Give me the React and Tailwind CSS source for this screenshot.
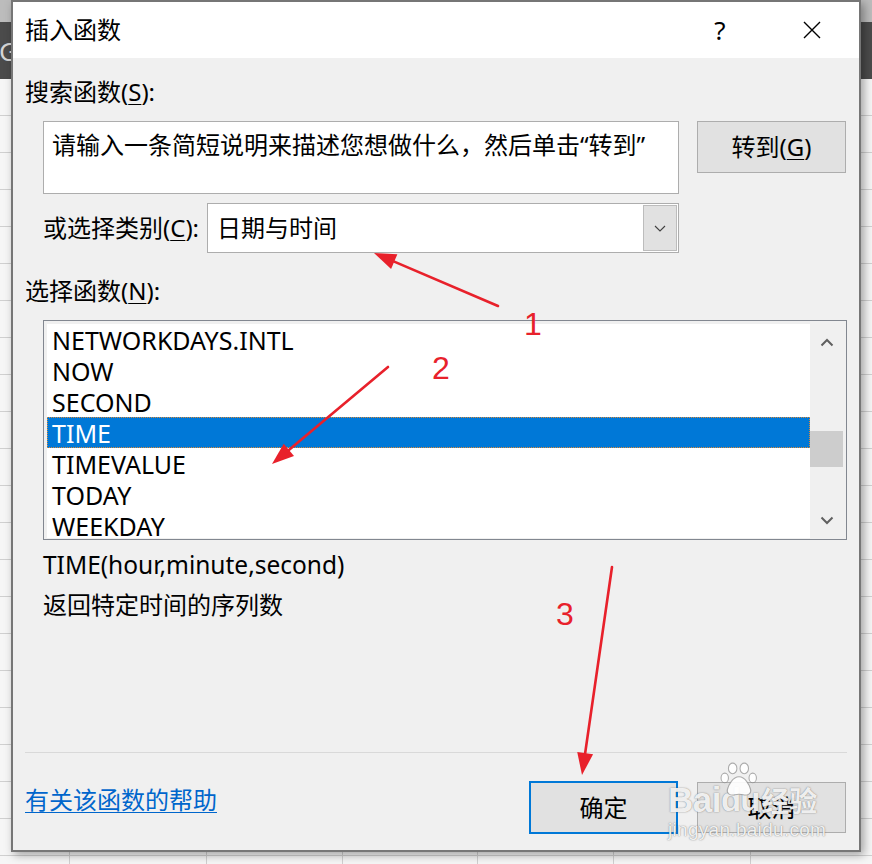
import React from "react";

const ROWS = Array.from({ length: 22 }, (_, i) => i);
const COLS = [0, 1, 2, 3, 4, 5, 6];
const ITEMS = ["NETWORKDAYS.INTL", "NOW", "SECOND", "TIME", "TIMEVALUE", "TODAY", "WEEKDAY"];

function arrowHead(x1, y1, x2, y2, len = 22, half = 8) {
  const dx = x2 - x1;
  const dy = y2 - y1;
  const d = Math.hypot(dx, dy);
  const ux = dx / d;
  const uy = dy / d;
  const bx = x2 - ux * len;
  const by = y2 - uy * len;
  const px = -uy * half;
  const py = ux * half;
  return {
    pts: `${x2},${y2} ${bx + px},${by + py} ${bx - px},${by - py}`,
    bx,
    by,
  };
}

function Arrow({ x1, y1, x2, y2 }) {
  const h = arrowHead(x1, y1, x2, y2);
  return (
    <g>
      <line x1={x1} y1={y1} x2={h.bx} y2={h.by} stroke="#e8212b" strokeWidth="2.6" strokeLinecap="round" />
      <polygon points={h.pts} fill="#e8212b" />
    </g>
  );
}

function U({ children }) {
  return <span className="underline underline-offset-[3px] decoration-1">{children}</span>;
}

export default function App() {
  return (
    <div className="relative w-[872px] h-[864px] overflow-hidden bg-[#f6f6f6] font-['Noto_Sans','Noto_Sans_CJK_SC',sans-serif] text-black">
      {/* spreadsheet backdrop */}
      <div className="absolute inset-0 flex flex-col">
        <div className="h-[22px] shrink-0 bg-[#bcbcbc]" />
        <div className="h-[57px] shrink-0 bg-[#4b4b4b] flex items-center">
          <span className="text-[26px] leading-none text-[#d4d4d4] ml-[-1px]">G</span>
        </div>
        {ROWS.map((r) => (
          <div
            key={r}
            className="h-[37px] shrink-0 grid grid-cols-[70px_137px_136px_135px_136px_137px_1fr] border-b border-[#d0d0d0]"
          >
            {COLS.map((c) => (
              <div key={c} className={c < 6 ? "border-r border-[#d0d0d0]" : ""} />
            ))}
          </div>
        ))}
      </div>

      {/* dialog window */}
      <div className="absolute left-[11px] top-0 w-[850px] h-[852px] border-2 border-[#767676] bg-[#f0f0f0] shadow-[3px_3px_9px_rgba(0,0,0,0.35)] flex flex-col">
        {/* title bar */}
        <div className="h-[56px] shrink-0 bg-white flex items-center pl-[12px] pr-[27px]">
          <span className="text-[24px] leading-[34px]">插入函数</span>
          <span className="ml-auto w-[40px] text-center text-[26px] leading-[34px]">?</span>
          <span className="ml-[52px] w-[40px] h-[34px] flex items-center justify-center">
            <svg width="18" height="18" viewBox="0 0 18 18">
              <path d="M1 1 L17 17 M17 1 L1 17" stroke="#000" strokeWidth="1.4" fill="none" />
            </svg>
          </span>
        </div>

        {/* body */}
        <div className="flex-1 flex flex-col px-[12px] pt-[17px] pb-[16px] text-[24px]">
          <div className="leading-[34px]">
            搜索函数(<U>S</U>):
          </div>

          <div className="mt-[12px] ml-[18px] flex gap-[18px]">
            <div className="w-[636px] h-[73px] border border-[#adadad] bg-white pl-[8px] pt-[6px] leading-[34px]">
              请输入一条简短说明来描述您想做什么，然后单击“转到”
            </div>
            <div className="w-[149px] h-[52px] border border-[#adadad] bg-[#e1e1e1] flex items-center justify-center leading-[34px]">
              转到(<U>G</U>)
            </div>
          </div>

          <div className="mt-[9px] ml-[18px] flex items-center h-[50px]">
            <div className="w-[164px] leading-[34px]">
              或选择类别(<U>C</U>):
            </div>
            <div className="w-[472px] h-[50px] border border-[#adadad] bg-white flex">
              <div className="flex-1 pl-[9px] flex items-center leading-[34px]">日期与时间</div>
              <div className="m-[1px] w-[34px] bg-[#e1e1e1] border border-[#bcbcbc] flex items-center justify-center">
                <svg width="12" height="7" viewBox="0 0 12 7">
                  <path d="M1 1 L6 6 L11 1" stroke="#404040" strokeWidth="1.1" fill="none" />
                </svg>
              </div>
            </div>
          </div>

          <div className="mt-[21px] leading-[34px]">
            选择函数(<U>N</U>):
          </div>

          <div className="mt-[12px] ml-[18px] w-[804px] h-[220px] border border-[#828790] bg-[#f0f0f0] pt-[3px] pl-[3px] pr-[3px] pb-[1px] flex">
            <div className="flex-1 bg-white overflow-hidden">
              {ITEMS.map((it, i) => (
                <div
                  key={it}
                  className={
                    "h-[31px] pl-[5px] pt-px text-[25px] leading-[31px] whitespace-nowrap " +
                    (i === 3
                      ? "bg-[#0078d7] text-white outline-1 outline-dotted outline-[#d98a3a] -outline-offset-1"
                      : "")
                  }
                >
                  {it}
                </div>
              ))}
            </div>
            <div className="w-[33px] bg-[#f0f0f0] flex flex-col">
              <div className="h-[36px] flex items-center justify-center">
                <svg width="14" height="9" viewBox="0 0 14 9">
                  <path d="M1.5 7.5 L7 2 L12.5 7.5" stroke="#606060" strokeWidth="2" fill="none" />
                </svg>
              </div>
              <div className="flex-1">
                <div className="mt-[71px] h-[36px] bg-[#cdcdcd]" />
              </div>
              <div className="h-[36px] flex items-center justify-center">
                <svg width="14" height="9" viewBox="0 0 14 9">
                  <path d="M1.5 1.5 L7 7 L12.5 1.5" stroke="#606060" strokeWidth="2" fill="none" />
                </svg>
              </div>
            </div>
          </div>

          <div className="mt-[5px] ml-[18px] text-[24.5px] leading-[40px]">TIME(hour,minute,second)</div>
          <div className="ml-[18px] leading-[40px]">返回特定时间的序列数</div>

          <div className="mt-auto h-px bg-[#d9d9d9]" />
          <div className="mt-[28px] flex items-start">
            <a className="mt-[2px] leading-[34px] text-[#0066cc] underline underline-offset-[3px] decoration-1">
              有关该函数的帮助
            </a>
            <div className="ml-auto w-[149px] h-[53px] border-2 border-[#0078d7] bg-[#e1e1e1] flex items-center justify-center leading-[34px]">
              确定
            </div>
            <div className="ml-[19px] mt-[1px] mr-[1px] w-[149px] h-[51px] border border-[#adadad] bg-[#e1e1e1] flex items-center justify-center leading-[34px]">
              取消
            </div>
          </div>
        </div>
      </div>

      {/* Baidu watermark */}
      <div className="absolute left-[668px] top-[764px] flex flex-col pointer-events-none text-[rgba(255,255,255,0.9)] [text-shadow:0_0_1px_rgba(80,80,80,0.6),0_0_2px_rgba(80,80,80,0.35)]">
        <div className="flex items-end h-[56px]">
          <span className="font-['Liberation_Sans',sans-serif] font-bold text-[35px] leading-[40px] tracking-[-0.5px]">Bai</span>
          <span className="relative font-['Liberation_Sans',sans-serif] font-bold text-[33px] leading-[40px] tracking-[-1px]">
            du
            <svg
              className="absolute left-[-1px] top-[-18px]"
              width="38"
              height="36"
              viewBox="0 0 36 34"
            >
              <g fill="rgba(255,255,255,0.9)" stroke="rgba(110,110,110,0.55)" strokeWidth="1">
                <ellipse cx="12" cy="6" rx="4" ry="5" />
                <ellipse cx="23" cy="6" rx="4" ry="5" />
                <ellipse cx="4.5" cy="15" rx="3.5" ry="4.5" />
                <ellipse cx="31" cy="15" rx="3.5" ry="4.5" />
                <path d="M18 14 C12 14 8 22 7 26 C6 30 10 32 14 31 C16 30.5 20 30.5 22 31 C26 32 30 30 29 26 C28 22 24 14 18 14 Z" />
              </g>
            </svg>
          </span>
          <span className="ml-[2px] font-['Noto_Sans_CJK_SC',sans-serif] font-bold text-[28px] leading-[40px]">经验</span>
        </div>
        <span className="font-['Liberation_Sans',sans-serif] text-[19px] leading-[20px] tracking-[0.3px]">jingyan.baidu.com</span>
      </div>

      {/* red annotations */}
      <svg className="absolute inset-0 pointer-events-none" width="872" height="864" viewBox="0 0 872 864">
        <Arrow x1={498} y1={306} x2={374} y2={253} />
        <Arrow x1={388} y1={367} x2={272} y2={464} />
        <Arrow x1={612} y1={567} x2={582} y2={775} />
        <g fill="#e8212b" fontFamily="Liberation Sans, sans-serif" fontSize="32" textAnchor="middle">
          <text x="533" y="335">1</text>
          <text x="441" y="379">2</text>
          <text x="565" y="625">3</text>
        </g>
      </svg>
    </div>
  );
}
